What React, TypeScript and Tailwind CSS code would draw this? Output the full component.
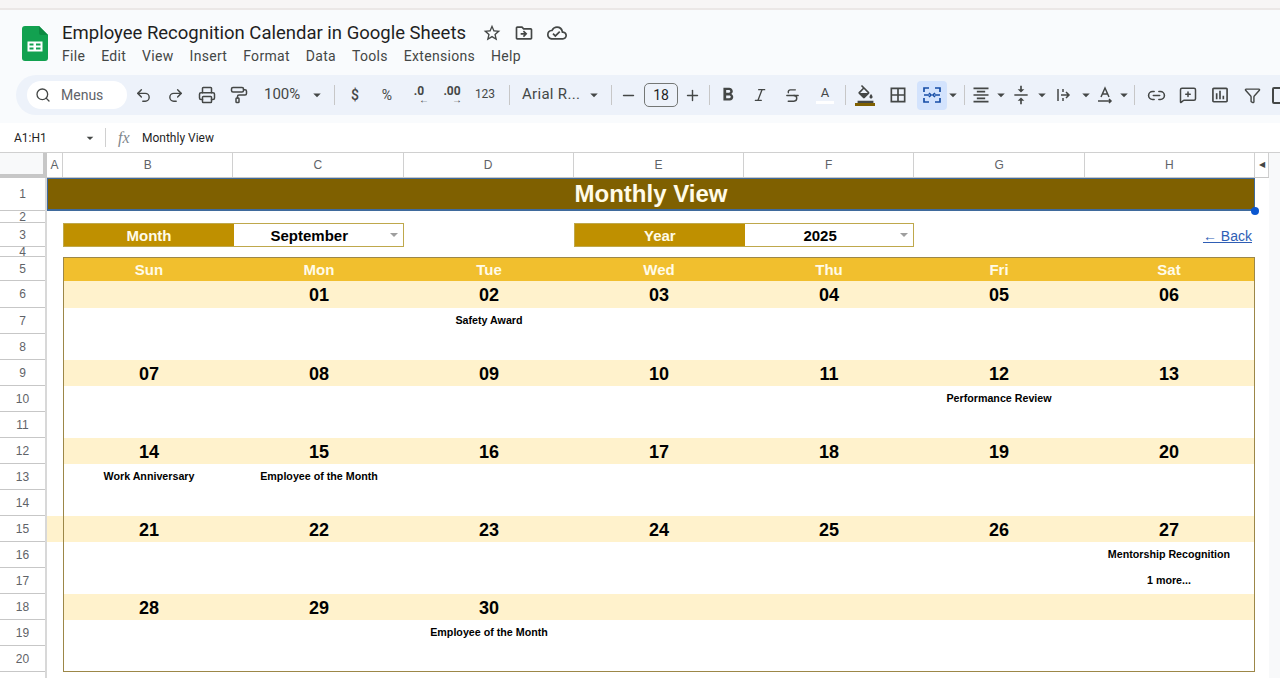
import type { ReactNode } from 'react';
import {
  Funnel, Italic, Link2, MessageSquarePlus, Minus, PaintRoller, Plus, Printer, Redo2, Search, Strikethrough, Undo2,
} from 'lucide-react';
import {
  MdArrowDropDown, MdBorderAll, MdFormatAlignCenter, MdFormatBold, MdFormatColorFill, MdInsertChartOutlined,
  MdOutlineCloudDone, MdOutlineDriveFileMove, MdStarBorder, MdVerticalAlignCenter,
} from 'react-icons/md';

const menus = ['File', 'Edit', 'View', 'Insert', 'Format', 'Data', 'Tools', 'Extensions', 'Help'];
const columns = ['B', 'C', 'D', 'E', 'F', 'G', 'H'];
const dayNames = ['Sun', 'Mon', 'Tue', 'Wed', 'Thu', 'Fri', 'Sat'];
const rowHeights = [33, 12, 24, 10, 24, 27, 26, 26, 26, 26, 26, 26, 26, 26, 26, 26, 26, 26, 26, 26, 26];

const weeks = [
  { days: ['', '01', '02', '03', '04', '05', '06'], first: { 2: 'Safety Award' }, second: {} },
  { days: ['07', '08', '09', '10', '11', '12', '13'], first: { 5: 'Performance Review' }, second: {} },
  { days: ['14', '15', '16', '17', '18', '19', '20'], first: { 0: 'Work Anniversary', 1: 'Employee of the Month' }, second: {} },
  { days: ['21', '22', '23', '24', '25', '26', '27'], first: { 6: 'Mentorship Recognition' }, second: { 6: '1 more...' } },
  { days: ['28', '29', '30', '', '', '', ''], first: { 2: 'Employee of the Month' }, second: {} },
] as { days: string[]; first: Record<number, string>; second: Record<number, string> }[];

function Logo() {
  return (
    <svg width="26" height="35" viewBox="0 0 26 35">
      <path d="M3 0h14l9 9v23a3 3 0 0 1-3 3H3a3 3 0 0 1-3-3V3a3 3 0 0 1 3-3z" fill="#12a150" />
      <path d="M17 0l9 9h-7a2 2 0 0 1-2-2z" fill="#0c8a42" />
      <path d="M5.500 15.500h15v10h-15z M7.500 17.500v2h4v-2z M14 17.500v2h4.500v-2z M7.500 21.500v2h4v-2z M14 21.500v2h4.500v-2z" fill="#fff" fillRule="evenodd" />
    </svg>
  );
}

function MergeIcon() {
  return (
    <svg width="18" height="18" viewBox="0 0 18 18" fill="none" stroke="#174ea6" strokeWidth="1.700">
      <path d="M1 6V2h5M12 2h5v4M1 12v4h5M12 16h5v-4" />
      <path d="M1 9h5M6 7l2 2-2 2M17 9h-5M12 7l-2 2 2 2" />
    </svg>
  );
}

function ClipIcon() {
  return (
    <svg width="16" height="16" viewBox="0 0 16 16" fill="none" stroke="#444746" strokeWidth="1.500">
      <path d="M2 2v12M5 8h8M10 5l3 3-3 3M7 2v3M7 11v3" />
    </svg>
  );
}

function RotateIcon() {
  return (
    <svg width="18" height="18" viewBox="0 0 18 18" fill="none" stroke="#444746" strokeWidth="1.500">
      <path d="M5 11l4-9 4 9M6.500 8h5M2 15h13M13 13l2 2-2 2" />
    </svg>
  );
}

function Tool({ className, children }: { className: string; children: ReactNode }) {
  return <div className={`flex h-full shrink-0 items-center justify-center text-[#444746] ${className}`}>{children}</div>;
}

function Divider({ className }: { className: string }) {
  return <div className={`h-5 w-px shrink-0 bg-[#c7c7c7] ${className}`} />;
}

function Caret({ className = 'text-lg' }: { className?: string }) {
  return <MdArrowDropDown className={`shrink-0 text-[#444746] ${className}`} />;
}

function Toolbar() {
  return (
    <div className="ml-4 mt-[10px] flex h-10 items-center overflow-hidden rounded-l-[20px] bg-[#edf2fa] pl-[11px] text-sm">
      <div className="flex h-7 w-[100px] shrink-0 items-center rounded-full bg-white pl-[8px] font-['Roboto',sans-serif] text-[#5f6368]">
        <Search size={16} strokeWidth={2} className="mr-[10px] text-[#444746]" />
        Menus
      </div>
      <Tool className="w-8"><Undo2 size={17} /></Tool>
      <Tool className="w-8"><Redo2 size={17} /></Tool>
      <Tool className="w-8"><Printer size={18} /></Tool>
      <Tool className="w-[31px]"><PaintRoller size={18} /></Tool>
      <Tool className="w-[76px] justify-start gap-[8px] pl-[10px] font-['Roboto',sans-serif] text-[15px]">100%<Caret /></Tool>
      <Divider className="mx-[4px]" />
      <Tool className="w-8 font-['Roboto',sans-serif] text-[14px] font-medium">$</Tool>
      <Tool className="w-8 font-['Roboto',sans-serif] text-[14px]">%</Tool>
      <Tool className="w-8 flex-col font-['Roboto',sans-serif] text-[12px] font-bold leading-[10px]">
        <span>.0</span>
        <span className="ml-[10px] text-[10px] font-normal leading-[8px]">←</span>
      </Tool>
      <Tool className="w-[34px] flex-col font-['Roboto',sans-serif] text-[12px] font-bold leading-[10px]">
        <span>.00</span>
        <span className="ml-[10px] text-[10px] font-normal leading-[8px]">→</span>
      </Tool>
      <Tool className="w-8 font-['Roboto',sans-serif] text-[12px]">123</Tool>
      <Divider className="ml-[8px]" />
      <Tool className="w-[91px] justify-start gap-[5px] pl-[12px] font-['Roboto',sans-serif] text-[15px] tracking-[0.3px]">
        <span className="whitespace-nowrap">Arial R...</span><Caret />
      </Tool>
      <Divider className="ml-[10px]" />
      <Tool className="w-[32px]"><Minus size={17} /></Tool>
      <div className="flex h-6 w-[34px] shrink-0 items-center justify-center rounded-[5px] border border-[#747775] font-['Roboto',sans-serif] text-sm text-[#1f1f1f]">18</div>
      <Tool className="w-[28px]"><Plus size={17} /></Tool>
      <Divider className="ml-[3px]" />
      <Tool className="ml-[2px] w-8"><MdFormatBold className="text-[22px]" /></Tool>
      <Tool className="w-8"><Italic size={16} /></Tool>
      <Tool className="w-8"><Strikethrough size={17} /></Tool>
      <Tool className="w-[34px] flex-col font-['Roboto',sans-serif] text-[13px] leading-[14px]">
        A
        <span className="mt-[1px] h-[3px] w-[18px] bg-white" />
      </Tool>
      <Divider className="ml-[3px]" />
      <Tool className="w-[38px] flex-col">
        <MdFormatColorFill className="-mb-[1px] text-[19px]" />
        <span className="h-[3px] w-5 bg-[#7f6000]" />
      </Tool>
      <Tool className="w-[28px]"><MdBorderAll className="text-xl" /></Tool>
      <div className="ml-[5px] flex h-[29px] w-[30px] shrink-0 items-center justify-center rounded-[4px] bg-[#d3e3fd]"><MergeIcon /></div>
      <Tool className="w-[12px]"><Caret /></Tool>
      <Divider className="ml-[5px]" />
      <Tool className="w-[29px] pl-[3px]"><MdFormatAlignCenter className="text-xl" /></Tool>
      <Tool className="w-[13px]"><Caret /></Tool>
      <Tool className="w-[28px]"><MdVerticalAlignCenter className="text-xl" /></Tool>
      <Tool className="w-[14px]"><Caret /></Tool>
      <Tool className="w-[30px]"><ClipIcon /></Tool>
      <Tool className="w-[14px]"><Caret /></Tool>
      <Tool className="w-[24px]"><RotateIcon /></Tool>
      <Tool className="w-[14px]"><Caret /></Tool>
      <Divider className="ml-[3px]" />
      <Tool className="ml-[5px] w-8"><Link2 size={19} /></Tool>
      <Tool className="w-8"><MessageSquarePlus size={18} /></Tool>
      <Tool className="w-8"><MdInsertChartOutlined className="text-xl" /></Tool>
      <Tool className="w-8"><Funnel size={17} /></Tool>
      <Tool className="ml-[4px] w-[16px] justify-start"><span className="h-[17px] w-[16px] rounded-[2px] border-2 border-[#444746]" /></Tool>
    </div>
  );
}

function DropRow({ label, value }: { label: string; value: string }) {
  return (
    <div className="col-span-2 flex h-full border border-[#bfa84c]">
      <div className="flex w-[170px] shrink-0 items-center justify-center bg-[#bf9000] pt-px text-[15px] font-bold text-[#fffbe8]">{label}</div>
      <div className="relative flex flex-1 items-center justify-center pr-[18px] pt-px text-[15px] font-bold text-black">
        {value}
        <span className="absolute right-[5px] top-[9px] h-0 w-0 border-x-[4px] border-t-[4px] border-x-transparent border-t-[#9e9e9e]" />
      </div>
    </div>
  );
}

function Week({ week, row }: { week: (typeof weeks)[number]; row: number }) {
  return (
    <div>
      <div className={`relative grid grid-cols-7 bg-[#fff2cc] text-lg font-bold text-black ${row === 0 ? 'h-[27px] pb-px' : 'h-[26px] pb-[3px]'}`}>
        {week.days.map((d, i) => (
          <div key={i} className="flex items-center justify-center">{d}</div>
        ))}
        {row === 3 && <div className="absolute -left-[17px] top-0 h-full w-4 bg-[#fff2cc]" />}
      </div>
      {[week.first, week.second].map((events, k) => (
        <div key={k} className="grid h-[26px] grid-cols-7 pb-px text-[10.7px] font-bold text-black">
          {week.days.map((_, i) => (
            <div key={i} className="flex items-center justify-center whitespace-nowrap">{events[i]}</div>
          ))}
        </div>
      ))}
    </div>
  );
}

export default function App() {
  return (
    <div className="h-[678px] w-[1280px] overflow-hidden bg-white font-['Liberation_Sans',sans-serif]">
      {/* Chrome de la page */}
      <div className="h-[10px] border-b-2 border-[#ebe7e6] bg-[#f7f5f5]" />
      <div className="h-[113px] bg-[#f9fbfd]">
        <div className="flex h-[55px]">
          <div className="ml-[22px] mt-[16px]"><Logo /></div>
          <div className="ml-[14px] mt-[11px]">
            <div className="flex items-center font-['Roboto',sans-serif] text-[#1f1f1f]">
              <span className="whitespace-nowrap text-[18.5px] leading-6">Employee Recognition Calendar in Google Sheets</span>
              <MdStarBorder className="ml-[16px] text-xl text-[#444746]" />
              <MdOutlineDriveFileMove className="ml-[12px] text-xl text-[#444746]" />
              <MdOutlineCloudDone className="ml-[13px] text-xl text-[#444746]" />
            </div>
            <div className="mt-[1px] flex gap-4 font-['Roboto',sans-serif] text-sm leading-5 tracking-[0.3px] text-[#444746]">
              {menus.map((m) => <span key={m}>{m}</span>)}
            </div>
          </div>
        </div>
        <Toolbar />
      </div>

      {/* Barre de formule */}
      <div className="flex h-[30px] items-center border-b border-[#d0d0d0] font-['Roboto',sans-serif] text-xs text-[#1f1f1f]">
        <span className="w-[82px] pl-[14px]">A1:H1</span>
        <Caret className="text-base" />
        <span className="ml-[7px] h-[19px] w-px bg-[#d0d0d0]" />
        <span className="ml-[12px] w-[24px] font-['Liberation_Serif',serif] text-[16px] italic text-[#80868b]">fx</span>
        <span>Monthly View</span>
      </div>

      {/* Feuille */}
      <div className="flex text-xs text-[#5f6368]">
        <div className="w-[1269px] shrink-0">
          <div className="flex h-[25px] border-b border-[#c7c7c7]">
            <div className="w-[47px] shrink-0 border-b-[3px] border-r-[4px] border-[#c7c7c7] bg-[#f8f9fa]" />
            <div className="flex w-[16px] shrink-0 items-center justify-center border-r border-[#d0d0d0]">A</div>
            <div className="grid w-[1192px] shrink-0 grid-cols-7">
              {columns.map((c) => (
                <div key={c} className="flex items-center justify-center border-r border-[#d0d0d0]">{c}</div>
              ))}
            </div>
            <div className="flex flex-1 items-center justify-center border-r border-[#d0d0d0] text-[8px] text-[#444746]">◀</div>
          </div>

          <div className="flex">
            <div className="w-[47px] shrink-0 border-r-2 border-[#d8d8d8]">
              {rowHeights.map((h, i) => (
                <div
                  key={i}
                  style={{ height: h }}
                  className="flex items-center justify-center overflow-hidden border-b border-[#c7c7c7]"
                >
                  {i + 1}
                </div>
              ))}
            </div>

            <div className="relative w-[1208px] shrink-0">
              <div className="flex h-[33px] items-center justify-center border border-b-2 border-[#3f6a9c] bg-[#7f6000] text-2xl font-bold text-[#fffbe8]">
                Monthly View
              </div>
              <span className="absolute -right-[4px] top-[29px] h-2 w-2 rounded-full bg-[#0b57d0]" />

              <div className="ml-[16px] mt-[12px] grid h-[24px] w-[1192px] grid-cols-7">
                <DropRow label="Month" value="September" />
                <div />
                <DropRow label="Year" value="2025" />
                <div className="col-span-2 flex items-center justify-end pr-[3px] pt-[3px] text-[14px] text-[#2f5eb5] underline">← Back</div>
              </div>

              <div className="ml-[16px] mt-[10px] h-[415px] w-[1192px] border border-[#9c8748]">
                <div className="grid h-[23px] grid-cols-7 bg-[#f1bf2e] text-[15px] font-bold text-[#fffbe8]">
                  {dayNames.map((d) => (
                    <div key={d} className="flex items-center justify-center">{d}</div>
                  ))}
                </div>
                {weeks.map((w, i) => <Week key={i} week={w} row={i} />)}
              </div>
            </div>
          </div>
        </div>
        <div className="h-[530px] flex-1 bg-[#f8f9fa]" />
      </div>
    </div>
  );
}
